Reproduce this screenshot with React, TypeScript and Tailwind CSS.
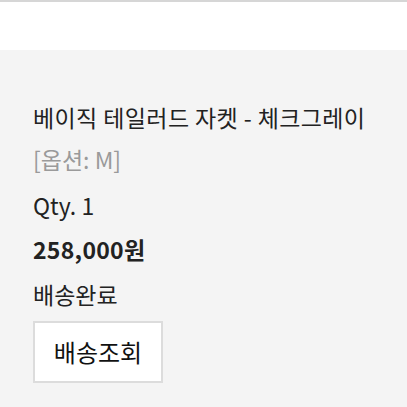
import React from 'react';

const font = { fontFamily: '"Noto Sans CJK KR", "Noto Sans", sans-serif' };

export default function App() {
  return (
    <div className="w-[407px] h-[407px] overflow-hidden bg-[#f4f4f4]" style={font}>
      {/* 상단 영역 */}
      <div className="h-[50px] bg-white border-t-2 border-[#d6d6d6]" />

      {/* 주문 상품 */}
      <div className="pl-[33px] pt-[51px] flex flex-col text-[#222]">
        <div className="h-[32px] leading-[32px] text-[23px] tracking-[0.4px]">베이직 테일러드 자켓 - 체크그레이</div>
        <div className="mt-[10px] h-[32px] leading-[32px] text-[23px] text-[#9a9a9a]">[옵션: M]</div>
        <div className="mt-[14px] h-[32px] leading-[32px] text-[23px]">Qty. 1</div>
        <div className="mt-[12px] h-[32px] leading-[32px] text-[23px] font-bold tracking-[0.3px]">258,000원</div>
        <div className="mt-[13px] h-[32px] leading-[32px] text-[23px]">배송완료</div>
        <button className="mt-[11px] w-[130px] h-[62px] bg-white border-2 border-[#dcdcdc] text-[24px] text-[#111]">
          배송조회
        </button>
      </div>
    </div>
  );
}
